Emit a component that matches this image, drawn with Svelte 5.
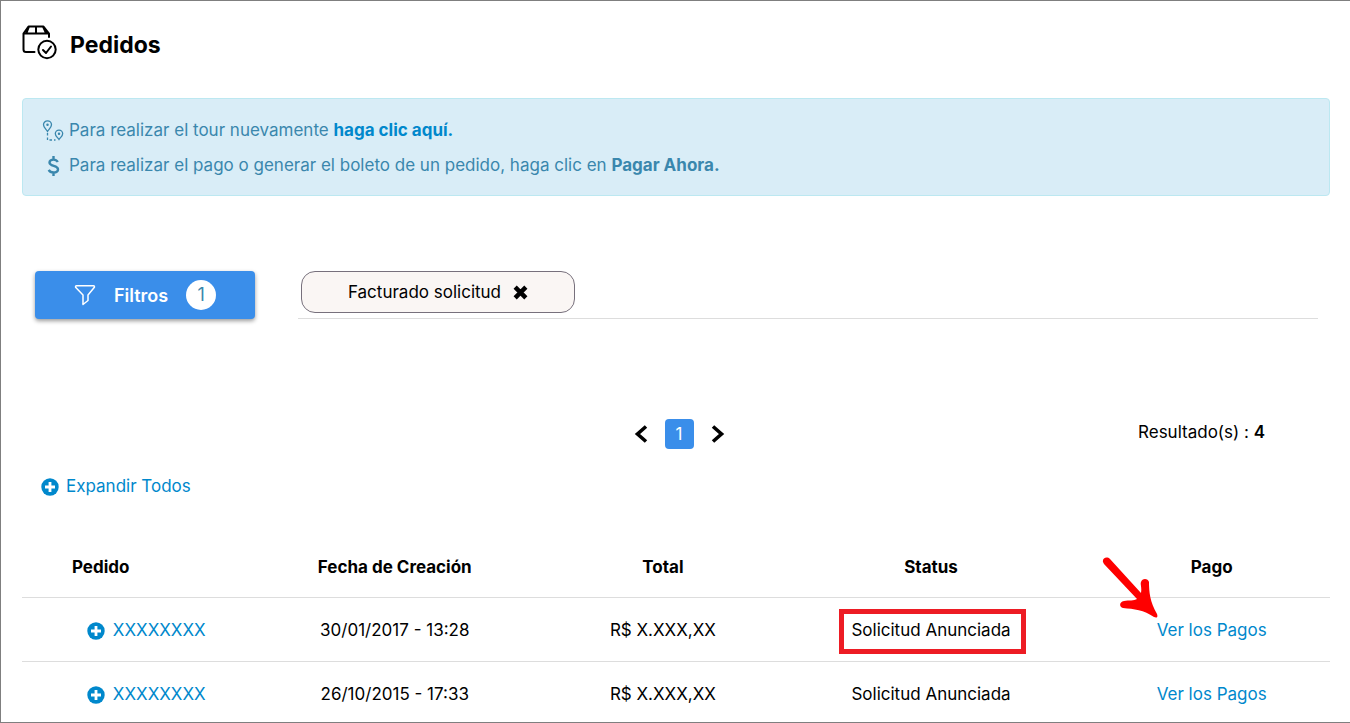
<script lang="ts">
  type Order = { id: string; created: string; total: string; status: string; highlight?: boolean };

  const orders: Order[] = [
    { id: 'XXXXXXXX', created: '30/01/2017 - 13:28', total: 'R$ X.XXX,XX', status: 'Solicitud Anunciada', highlight: true },
    { id: 'XXXXXXXX', created: '26/10/2015 - 17:33', total: 'R$ X.XXX,XX', status: 'Solicitud Anunciada' },
  ];

  let filters = $state(['Facturado solicitud']);
  const results = 4;

  const removeFilter = (name: string) => (filters = filters.filter((f) => f !== name));
</script>

{#snippet plus()}
  <svg class="plus" viewBox="0 0 18 18" width="18" height="18" aria-hidden="true">
    <circle cx="9" cy="9" r="8.7" fill="currentColor" />
    <path d="M9 4v10M4 9h10" stroke="#fff" stroke-width="2.8" />
  </svg>
{/snippet}

<main>
  <header>
    <svg viewBox="0 0 36 36" width="36" height="36" fill="none" stroke="#000" stroke-width="2" stroke-linejoin="round" stroke-linecap="round" aria-hidden="true">
      <path d="M12.500 28H4a2.500 2.500 0 0 1-2.500-2.500V9.500L6.500 2.500h15L27 9.500V13M1.500 9.500H27M7 2.500L4.500 9M21 2.500L24 9M14 2.500v6.500" />
      <circle cx="25" cy="25.500" r="8.700" />
      <path d="M21 26l3 3 5-6.500" />
    </svg>
    <h1>Pedidos</h1>
  </header>

  <section class="notice">
    <p>
      <svg viewBox="0 0 22 22" width="22" height="22" fill="none" stroke="currentColor" stroke-width="1.300" aria-hidden="true">
        <path d="M5.500 11.500C4 9 1.500 7.200 1.500 4.800a4 4 0 0 1 8 0c0 2.400-2.500 4.200-4 6.700zM17 19.500c-1.300-2-3.700-3.200-3.700-5.700a3.700 3.700 0 0 1 7.400 0c0 2.500-2.400 3.700-3.700 5.700z" />
        <path d="M5.500 13v7h8" stroke-dasharray="2.500 2" />
        <circle cx="5.500" cy="4.800" r=".6" fill="currentColor" />
        <circle cx="17" cy="13.800" r=".6" fill="currentColor" />
      </svg>
      <span>Para realizar el tour nuevamente <a href="#tour">haga clic aquí.</a></span>
    </p>
    <p>
      <svg viewBox="0 0 22 22" width="22" height="22" fill="none" stroke="currentColor" stroke-width="2.400" aria-hidden="true">
        <path d="M15.800 7c-1-1.700-2.500-2.400-4.300-2.400-2.500 0-4 1.200-4 3 0 4.200 8.500 2.400 8.500 6.700 0 2-1.800 3.200-4.500 3.200-2.300 0-3.800-.8-4.800-2.600M11.500 1v4M11.500 17v4" />
      </svg>
      <span>Para realizar el pago o generar el boleto de un pedido, haga clic en <strong>Pagar Ahora.</strong></span>
    </p>
  </section>

  <section class="filters">
    <button class="filter-btn">
      <svg viewBox="0 0 22 22" width="22" height="22" fill="none" stroke="currentColor" stroke-width="1.500" stroke-linejoin="round" aria-hidden="true">
        <path d="M2.500 1.800h17c1 0 1.200 1 .7 1.800L14 11v5.500l-5 4V11L1.800 3.600c-.5-.8-.3-1.800.7-1.800z" />
      </svg>
      Filtros
      <span class="count">1</span>
    </button>
    <div class="chips">
      {#each filters as name}
        <div class="chip">
          {name}
          <button aria-label="Quitar {name}" onclick={() => removeFilter(name)}>
            <svg viewBox="0 0 14 14" width="15" height="15" aria-hidden="true">
              <path d="M2 2l10 10M12 2L2 12" stroke="#000" stroke-width="4.200" />
            </svg>
          </button>
        </div>
      {/each}
    </div>
  </section>

  <section class="paging">
    <nav>
      <button aria-label="Anterior">
        <svg viewBox="0 0 14 18" width="14" height="18" fill="none" stroke="#000" stroke-width="3.600"><path d="M12 1.500L3.500 9l8.500 7.500" /></svg>
      </button>
      <button class="current">1</button>
      <button aria-label="Siguiente">
        <svg viewBox="0 0 14 18" width="14" height="18" fill="none" stroke="#000" stroke-width="3.600"><path d="M2 1.500L10.500 9L2 16.500" /></svg>
      </button>
    </nav>
    <p>Resultado(s) : <b>{results}</b></p>
  </section>

  <a class="expand" href="#expandir">{@render plus()}Expandir Todos</a>

  <table>
    <thead>
      <tr>
        <th class="order">Pedido</th>
        <th class="date">Fecha de Creación</th>
        <th class="total">Total</th>
        <th class="status">Status</th>
        <th class="pay">Pago</th>
      </tr>
    </thead>
    <tbody>
      {#each orders as order}
        <tr>
          <td><a class="number" href="#pedido">{@render plus()}{order.id}</a></td>
          <td>{order.created}</td>
          <td>{order.total}</td>
          <td><span class:marked={order.highlight}>{order.status}</span></td>
          <td class="pay">
            <span class="pay-link">
              <a href="#pagos">Ver los Pagos</a>
              {#if order.highlight}
                <svg class="arrow" viewBox="0 0 56 62" width="56" height="62" aria-hidden="true">
                  <path d="M1 5C0 1 5-1 8 2L39 36C40 30 38 27 39 25C40 21 46 21 47 25C47 35 48 45 55 57C56 60 55 61 52 60C42 53 32 52 21 51C17 50 17 45 22 44C27 43 32 44 35 42L2 7z" fill="#fe0000" />
                </svg>
              {/if}
            </span>
          </td>
        </tr>
      {/each}
    </tbody>
  </table>
</main>

<style>
  :global(body) { background: #fff; }
  main { box-sizing: border-box; min-height: 100vh; padding: 23px 20px 0 21px; border: 1px solid #7f7f7f; border-right: 0; font: 17px/23px Inter, "Liberation Sans", sans-serif; color: #000; }
  button { font: inherit; color: inherit; background: none; border: 0; padding: 0; cursor: pointer; }
  a { color: #0088cc; text-decoration: none; }
  svg { display: block; flex: none; }

  header { display: flex; gap: 12px; height: 74px; }
  h1 { margin: 4px 0 0; font-size: 23px; line-height: 34px; font-weight: 700; }

  .notice { box-sizing: border-box; height: 98px; padding: 14px 19px; border: 1px solid #bce8f1; border-radius: 4px; background: #d9edf7; color: #3a87ad; }
  .notice p { display: flex; align-items: center; gap: 5px; height: 35px; margin: 0; }
  .notice a, .notice strong { font-weight: 700; }

  .filters { display: flex; align-items: flex-start; gap: 43px; margin: 75px 12px 0 13px; }
  .filter-btn { display: flex; align-items: center; justify-content: center; gap: 18px; width: 220px; height: 48px; border-radius: 4px; background: #3a8eea; color: #fff; font-size: 18px; font-weight: 600; box-shadow: 0 2px 4px rgba(0, 0, 0, 0.4); }
  .count { width: 30px; line-height: 30px; border-radius: 50%; background: #fff; color: #3a87ad; font-weight: 400; }
  .chips { flex: 1; height: 47px; padding-left: 3px; border-bottom: 1px solid #ddd; }
  .chip { box-sizing: border-box; display: flex; align-items: center; justify-content: center; gap: 12px; width: 274px; height: 42px; border: 1px solid #77707c; border-radius: 14px; background: #faf6f4; }

  .paging { display: grid; grid-template-columns: 1fr auto 1fr; align-items: center; margin-top: 100px; height: 30px; }
  nav { grid-column: 2; display: flex; align-items: center; gap: 17px; padding-left: 6px; }
  .current { width: 29px; height: 30px; border-radius: 4px; background: #3a8eea; color: #fff; }
  .paging p { margin: 0 65px 4px 0; text-align: right; }
  .paging b { font-weight: 600; }

  .expand { display: flex; align-items: center; gap: 7px; width: max-content; margin: 26px 0 0 19px; }

  table { width: 100%; margin-top: 40px; border-collapse: separate; border-spacing: 0; table-layout: fixed; text-align: center; }
  th, td { padding: 21px 0 19px; border-bottom: 1px solid #ddd; }
  th { padding: 18px 0; font-weight: 700; }
  .order { width: 19%; box-sizing: border-box; padding-left: 50px; text-align: left; }
  .date { width: 19%; }
  .total { width: 22%; }
  .status { width: 19%; }
  .pay { padding-left: 38px; }
  tbody tr:last-child td { padding-bottom: 16px; border-bottom: 0; }
  .number { display: flex; align-items: center; justify-content: center; gap: 8px; }
  .marked, .pay-link { position: relative; }
  .marked::after { content: ""; position: absolute; inset: -11px -15px -14px -12px; border: 5px solid #ed1c24; }
  .arrow { position: absolute; left: -55px; bottom: 21px; }
</style>
